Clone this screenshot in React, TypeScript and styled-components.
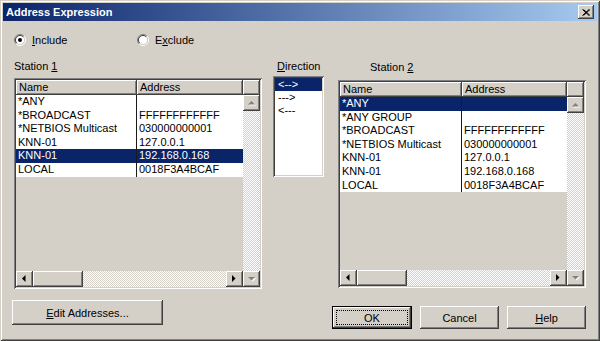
import styled, { createGlobalStyle } from "styled-components";

const GlobalStyle = createGlobalStyle`
  html, body {
    margin: 0;
    padding: 0;
    background: #d4d0c8;
  }
  body {
    font-family: "Liberation Sans", Arial, sans-serif;
    font-size: 11px;
    color: #000;
  }
`;

const raised = `
  box-shadow: inset -1px -1px #404040, inset 1px 1px #fff,
    inset -2px -2px #808080, inset 2px 2px #d4d0c8;
`;

const sunken = `
  box-shadow: inset 1px 1px #808080, inset -1px -1px #fff,
    inset 2px 2px #404040, inset -2px -2px #d4d0c8;
`;

const checker = `
  background-color: #fff;
  background-image: repeating-conic-gradient(#d4d0c8 0% 25%, #fff 0% 50%);
  background-size: 2px 2px;
`;

const Window = styled.div`
  width: 600px;
  height: 341px;
  box-sizing: border-box;
  padding: 3px;
  background: #d4d0c8;
  box-shadow: inset 1px 1px #d4d0c8, inset -1px -1px #404040,
    inset 2px 2px #fff, inset -2px -2px #808080;
  display: flex;
  flex-direction: column;
`;

const TitleBar = styled.div`
  height: 18px;
  display: flex;
  align-items: center;
  justify-content: space-between;
  padding: 0 3px;
  background: linear-gradient(to right, #0a246a, #a6caf0);
  color: #fff;
  font-weight: bold;
  font-size: 11px;
`;

const CloseButton = styled.div`
  width: 16px;
  height: 14px;
  background: #d4d0c8;
  ${raised}
  display: flex;
  align-items: center;
  justify-content: center;
`;

const RadioRow = styled.div`
  display: flex;
  margin-top: 12px;
  padding-left: 11px;
  height: 14px;
  align-items: center;
`;

const RadioOption = styled.label<{ $width?: number }>`
  display: flex;
  align-items: center;
  gap: 6px;
  width: ${(p) => (p.$width ? `${p.$width}px` : "auto")};
`;

const Body = styled.div`
  display: flex;
  padding-left: 11px;
  margin-top: 13px;
`;

const Column = styled.div<{ $width: number; $gap?: number }>`
  width: ${(p) => p.$width}px;
  margin-left: ${(p) => p.$gap ?? 0}px;
  display: flex;
  flex-direction: column;
`;

const Label = styled.div<{ $indent?: number; $top?: number; $below: number }>`
  line-height: 13px;
  height: 13px;
  padding-left: ${(p) => p.$indent ?? 0}px;
  margin-top: ${(p) => p.$top ?? 0}px;
  margin-bottom: ${(p) => p.$below}px;
`;

const ListFrame = styled.div<{ $height: number }>`
  height: ${(p) => p.$height}px;
  box-sizing: border-box;
  padding: 2px;
  background: #d4d0c8;
  ${sunken}
  display: grid;
  grid-template-columns: 1fr 17px;
  grid-template-rows: 15px 1fr;
`;

const HeaderRow = styled.div<{ $nameWidth: number }>`
  display: grid;
  grid-template-columns: ${(p) => p.$nameWidth}px 1fr;
`;

const HeaderCell = styled.div`
  background: #d4d0c8;
  box-shadow: inset -1px -1px #404040, inset 1px 1px #fff,
    inset -2px -2px #808080;
  padding-left: 3px;
  line-height: 15px;
  overflow: hidden;
  white-space: nowrap;
`;

const Content = styled.div`
  display: flex;
  flex-direction: column;
  min-height: 0;
`;

const Rows = styled.div`
  flex: 1;
`;

const Row = styled.div<{ $nameWidth: number; $selected?: boolean }>`
  display: grid;
  grid-template-columns: ${(p) => p.$nameWidth}px 1fr;
  height: 13.6px;
  line-height: 13.6px;
  background: ${(p) => (p.$selected ? "#0a246a" : "#fff")};
  color: ${(p) => (p.$selected ? "#fff" : "#000")};
`;

const Cell = styled.div<{ $divider?: boolean }>`
  padding-left: 2px;
  white-space: nowrap;
  overflow: hidden;
  border-right: ${(p) => (p.$divider ? "1px solid #1a1a1a" : "none")};
`;

const HScroll = styled.div<{ $thumbLeft: number; $thumbWidth: number }>`
  height: 16px;
  display: flex;
  ${checker}
`;

const VScroll = styled.div`
  display: flex;
  flex-direction: column;
  ${checker}
`;

const ScrollButton = styled.div`
  width: 17px;
  height: 16px;
  flex: none;
  background: #d4d0c8;
  ${raised}
  display: flex;
  align-items: center;
  justify-content: center;
`;

const Thumb = styled.div<{ $left: number; $width: number }>`
  width: ${(p) => p.$width}px;
  margin-left: ${(p) => p.$left}px;
  height: 16px;
  background: #d4d0c8;
  ${raised}
`;

const Track = styled.div`
  flex: 1;
`;

const DirectionBox = styled.div`
  height: 101px;
  box-sizing: border-box;
  padding: 2px;
  background: #fff;
  ${sunken}
`;

const DirItem = styled.div<{ $selected?: boolean }>`
  height: 13px;
  line-height: 13px;
  padding-left: 3px;
  background: ${(p) => (p.$selected ? "#0a246a" : "transparent")};
  color: ${(p) => (p.$selected ? "#fff" : "#000")};
`;

const Footer = styled.div`
  display: flex;
  justify-content: space-between;
  align-items: flex-start;
  padding: 0 11px 0 9px;
  margin-top: 11px;
`;

const ButtonGroup = styled.div`
  display: flex;
  gap: 8px;
  margin-top: 6px;
`;

const Button = styled.div<{ $width: number; $height: number; $default?: boolean }>`
  position: relative;
  width: ${(p) => p.$width}px;
  height: ${(p) => p.$height}px;
  box-sizing: border-box;
  display: flex;
  align-items: center;
  justify-content: center;
  background: #d4d0c8;
  ${(p) =>
    p.$default
      ? `border: 1px solid #000;
         box-shadow: inset -1px -1px #404040, inset 1px 1px #fff,
           inset -2px -2px #808080, inset 2px 2px #d4d0c8;`
      : raised}

  &::after {
    content: "";
    display: ${(p) => (p.$default ? "block" : "none")};
    position: absolute;
    inset: 3px;
    border: 1px dotted #000;
  }
`;

const U = styled.span`
  text-decoration: underline;
`;

function Radio({ checked }: { checked?: boolean }) {
  return (
    <svg width="12" height="12" viewBox="0 0 12 12">
      <circle cx="6" cy="6" r="4.5" fill="#fff" />
      <path d="M2.1 9.9 A5.5 5.5 0 0 1 9.9 2.1" stroke="#808080" fill="none" />
      <path d="M9.9 2.1 A5.5 5.5 0 0 1 2.1 9.9" stroke="#fff" fill="none" />
      <path d="M2.8 9.2 A4.5 4.5 0 0 1 9.2 2.8" stroke="#404040" fill="none" />
      <path d="M9.2 2.8 A4.5 4.5 0 0 1 2.8 9.2" stroke="#d4d0c8" fill="none" />
      {checked && <circle cx="6" cy="6" r="2" fill="#000" />}
    </svg>
  );
}

function Arrow({ dir, disabled }: { dir: "up" | "down" | "left" | "right"; disabled?: boolean }) {
  const pts = {
    up: "3.5,0 7,3.5 0,3.5",
    down: "0,0 7,0 3.5,3.5",
    left: "3.5,0 3.5,7 0,3.5",
    right: "0,0 0,7 3.5,3.5",
  }[dir];
  const vertical = dir === "up" || dir === "down";
  return (
    <svg width={vertical ? 8 : 5} height={vertical ? 5 : 8} viewBox={vertical ? "0 0 8 5" : "0 0 5 8"}>
      {disabled && <polygon points={pts} fill="#fff" transform="translate(1 1)" />}
      <polygon points={pts} fill={disabled ? "#808080" : "#000"} />
    </svg>
  );
}

type Entry = [string, string];

function ListView({
  rows,
  selected,
  nameWidth,
  height,
  thumbLeft,
}: {
  rows: Entry[];
  selected: number;
  nameWidth: number;
  height: number;
  thumbLeft: number;
}) {
  return (
    <ListFrame $height={height}>
      <HeaderRow $nameWidth={nameWidth}>
        <HeaderCell>Name</HeaderCell>
        <HeaderCell>Address</HeaderCell>
      </HeaderRow>
      <HeaderCell />
      <Content>
        <Rows>
          {rows.map(([name, addr], i) => (
            <Row key={i} $nameWidth={nameWidth} $selected={i === selected}>
              <Cell $divider>{name}</Cell>
              <Cell>{addr}</Cell>
            </Row>
          ))}
        </Rows>
        <HScroll $thumbLeft={thumbLeft} $thumbWidth={50}>
          <ScrollButton>
            <Arrow dir="left" />
          </ScrollButton>
          <Thumb $left={thumbLeft} $width={50} />
          <Track />
          <ScrollButton>
            <Arrow dir="right" />
          </ScrollButton>
        </HScroll>
      </Content>
      <VScroll>
        <ScrollButton>
          <Arrow dir="up" disabled />
        </ScrollButton>
        <Track />
        <ScrollButton>
          <Arrow dir="down" disabled />
        </ScrollButton>
      </VScroll>
    </ListFrame>
  );
}

const station1: Entry[] = [
  ["*ANY", ""],
  ["*BROADCAST", "FFFFFFFFFFFF"],
  ["*NETBIOS Multicast", "030000000001"],
  ["KNN-01", "127.0.0.1"],
  ["KNN-01", "192.168.0.168"],
  ["LOCAL", "0018F3A4BCAF"],
];

const station2: Entry[] = [
  ["*ANY", ""],
  ["*ANY GROUP", ""],
  ["*BROADCAST", "FFFFFFFFFFFF"],
  ["*NETBIOS Multicast", "030000000001"],
  ["KNN-01", "127.0.0.1"],
  ["KNN-01", "192.168.0.168"],
  ["LOCAL", "0018F3A4BCAF"],
];

export default function App() {
  return (
    <>
      <GlobalStyle />
      <Window>
        <TitleBar>
          <span>Address Expression</span>
          <CloseButton>
            <svg width="8" height="7" viewBox="0 0 8 7">
              <path d="M0.5 0.5 L7 6.5 M1.5 0.5 L8 6.5 M7 0.5 L0.5 6.5 M8 0.5 L1.5 6.5" stroke="#000" strokeWidth="1" />
            </svg>
          </CloseButton>
        </TitleBar>

        <RadioRow>
          <RadioOption $width={123}>
            <Radio checked />
            <span>
              <U>I</U>nclude
            </span>
          </RadioOption>
          <RadioOption>
            <Radio />
            <span>
              E<U>x</U>clude
            </span>
          </RadioOption>
        </RadioRow>

        <Body>
          <Column $width={248}>
            <Label $below={5}>
              Station <U>1</U>
            </Label>
            <ListView rows={station1} selected={4} nameWidth={121} height={211} thumbLeft={0} />
          </Column>
          <Column $width={51} $gap={11}>
            <Label $indent={4} $below={3}>
              <U>D</U>irection
            </Label>
            <DirectionBox>
              <DirItem $selected>&lt;--&gt;</DirItem>
              <DirItem>---&gt;</DirItem>
              <DirItem>&lt;---</DirItem>
            </DirectionBox>
          </Column>
          <Column $width={248} $gap={14}>
            <Label $indent={32} $top={1} $below={6}>
              Station <U>2</U>
            </Label>
            <ListView rows={station2} selected={0} nameWidth={122} height={208} thumbLeft={0} />
          </Column>
        </Body>

        <Footer>
          <Button $width={151} $height={25}>
            <span>
              <U>E</U>dit Addresses...
            </span>
          </Button>
          <ButtonGroup>
            <Button $width={80} $height={23} $default>
              OK
            </Button>
            <Button $width={79} $height={23}>
              Cancel
            </Button>
            <Button $width={79} $height={23}>
              <span>
                <U>H</U>elp
              </span>
            </Button>
          </ButtonGroup>
        </Footer>
      </Window>
    </>
  );
}
